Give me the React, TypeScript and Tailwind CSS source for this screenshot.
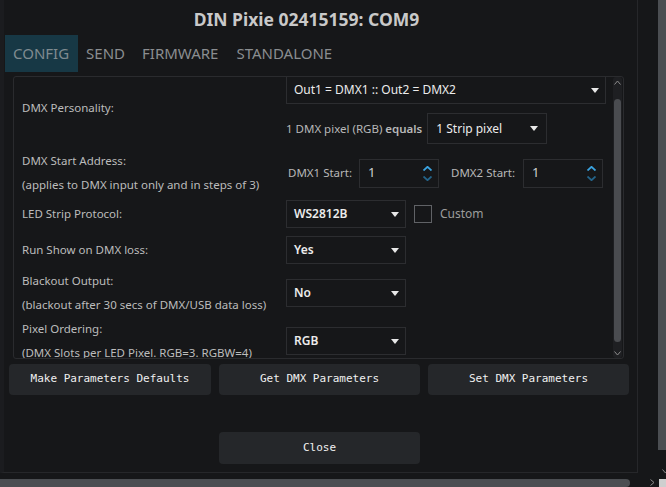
import React from "react";

const Tri = () => (
  <svg width="8" height="5" viewBox="0 0 8 5" className="shrink-0">
    <path d="M0 0 L8 0 L4 5 Z" fill="#e8e8e8" />
  </svg>
);

const Select = ({ text, className = "", bold = false }: { text: string; className?: string; bold?: boolean }) => (
  <div
    className={`flex shrink-0 items-center justify-between border border-[#2c2d30] bg-[#161719] pl-[7px] pr-[6px] text-[12px] text-[#ececec] ${bold ? "font-semibold" : ""} ${className}`}
  >
    <span>{text}</span>
    <Tri />
  </div>
);

const Spin = ({ value, className = "" }: { value: string; className?: string }) => (
  <div className={`flex h-[29px] w-[80px] shrink-0 items-center justify-between border border-[#2c2d30] pl-[8px] pr-[6px] text-[13px] text-[#cfcfcf] ${className}`}>
    <span>{value}</span>
    <div className="flex flex-col items-center gap-[5px]">
      <svg width="9" height="5" viewBox="0 0 9 5">
        <path d="M0.5 4.5 L4.5 0.8 L8.5 4.5" stroke="#3aa3e0" strokeWidth="1.8" fill="none" />
      </svg>
      <svg width="9" height="5" viewBox="0 0 9 5">
        <path d="M0.5 0.5 L4.5 4.2 L8.5 0.5" stroke="#24648a" strokeWidth="1.8" fill="none" />
      </svg>
    </div>
  </div>
);

const Label = ({ children }: { children: React.ReactNode }) => (
  <div className="whitespace-nowrap leading-[24px] text-[11.5px] text-[#bcbcbc]">{children}</div>
);

const Btn = ({ children, className = "" }: { children: React.ReactNode; className?: string }) => (
  <div
    className={`flex items-center justify-center rounded-[4px] bg-[#25272a] text-[11px] text-[#f0f0f0] ${className}`}
    style={{ fontFamily: '"DejaVu Sans Mono", "Liberation Mono", monospace' }}
  >
    {children}
  </div>
);

export default function App() {
  return (
    <div
      className="relative flex h-[487px] w-[666px] flex-col overflow-hidden bg-[#161719]"
      style={{ fontFamily: '"Noto Sans", "Open Sans", sans-serif' }}
    >
      <div className="flex h-[479px] shrink-0">
        {/* main content */}
        <div className="flex h-[473px] w-[638px] shrink-0 flex-col border-b border-r border-[#26272a] border-l-[4px] border-l-[#1b1c1f]">
          <div className="flex h-[35px] shrink-0 items-center justify-center pr-[28px] pt-[3px] text-[17.5px] font-bold text-[#c9c9c9]">
            DIN Pixie 02415159:&nbsp;COM9
          </div>
          <div className="flex h-[37px] shrink-0 items-center pl-[1px] text-[15px] text-[#8a8d90]">
            <div className="flex h-full items-center bg-[#173845] pl-[8px] pr-[9px] text-[#7f8b90]">CONFIG</div>
            <div className="px-[8px]">SEND</div>
            <div className="pl-[9px] pr-[8px]">FIRMWARE</div>
            <div className="pl-[10px] pr-[8px]">STANDALONE</div>
          </div>
          {/* panel */}
          <div className="ml-[9px] mt-[4px] flex h-[283px] w-[611px] shrink-0 overflow-hidden rounded-[3px] border border-[#2a2b2e]">
            <div className="flex flex-1 flex-col pl-[8px]">
              {/* row 1 */}
              <div className="flex h-[72px] shrink-0">
                <div className="w-[264px] pt-[19px]">
                  <Label>DMX Personality:</Label>
                </div>
                <div className="flex flex-col">
                  <Select text="Out1 = DMX1 :: Out2 = DMX2" className="-mt-px h-[28px] w-[320px]" />
                  <div className="mt-[9px] flex items-center">
                    <span className="whitespace-nowrap text-[11.5px] text-[#b8b8b8]">
                      1 DMX pixel (RGB) <span className="font-semibold">equals</span>
                    </span>
                    <Select text="1 Strip pixel" className="ml-[5px] h-[31px] w-[120px] pl-[8px] pr-[8px]" />
                  </div>
                </div>
              </div>
              {/* row 2 */}
              <div className="flex h-[48px] shrink-0 items-center">
                <div className="w-[264px]">
                  <Label>DMX Start Address:</Label>
                  <Label>(applies to DMX input only and in steps of 3)</Label>
                </div>
                <div className="flex items-center whitespace-nowrap text-[11.5px] text-[#b8b8b8]">
                  <span className="ml-[2px]">DMX1 Start:</span>
                  <Spin value="1" className="ml-[7px]" />
                  <span className="ml-[12px]">DMX2 Start:</span>
                  <Spin value="1" className="ml-[8px]" />
                </div>
              </div>
              {/* row 3 */}
              <div className="flex h-[34px] shrink-0 items-center">
                <div className="w-[264px]">
                  <Label>LED Strip Protocol:</Label>
                </div>
                <Select text="WS2812B" bold className="h-[28px] w-[120px]" />
                <div className="ml-[8px] h-[18px] w-[18px] border border-[#606266]" />
                <span className="ml-[8px] text-[12px] text-[#9c9c9c]">Custom</span>
              </div>
              {/* row 4 */}
              <div className="flex h-[38px] shrink-0 items-center">
                <div className="w-[264px]">
                  <Label>Run Show on DMX loss:</Label>
                </div>
                <Select text="Yes" bold className="h-[28px] w-[120px]" />
              </div>
              {/* row 5 */}
              <div className="flex h-[48px] shrink-0 items-center">
                <div className="w-[264px]">
                  <Label>Blackout Output:</Label>
                  <Label>(blackout after 30 secs of DMX/USB data loss)</Label>
                </div>
                <Select text="No" bold className="h-[28px] w-[120px]" />
              </div>
              {/* row 6 */}
              <div className="flex h-[48px] shrink-0 items-center">
                <div className="w-[264px]">
                  <Label>Pixel Ordering:</Label>
                  <Label>(DMX Slots per LED Pixel. RGB=3. RGBW=4)</Label>
                </div>
                <Select text="RGB" bold className="h-[28px] w-[120px]" />
              </div>
            </div>
            {/* inner scrollbar */}
            <div className="mr-px flex w-[9px] shrink-0 flex-col items-center rounded-[3px] bg-[#1e1f22]">
              <svg width="7" height="5" viewBox="0 0 7 5" className="mt-[3px] shrink-0">
                <path d="M0.5 4.5 L3.5 1 L6.5 4.5" stroke="#8c8c8c" strokeWidth="1" fill="none" />
              </svg>
              <div className="mt-[14px] h-[243px] w-[7px] shrink-0 rounded-full bg-[#4a4c50]" />
              <svg width="7" height="5" viewBox="0 0 7 5" className="mt-[9px] shrink-0">
                <path d="M0.5 0.5 L3.5 4 L6.5 0.5" stroke="#8c8c8c" strokeWidth="1" fill="none" />
              </svg>
            </div>
          </div>
          {/* buttons */}
          <div className="ml-[5px] mt-[5px] flex shrink-0 gap-[8px]">
            <Btn className="h-[31px] w-[202px]">Make Parameters Defaults</Btn>
            <Btn className="h-[31px] w-[201px]">Get DMX Parameters</Btn>
            <Btn className="h-[31px] w-[201px]">Set DMX Parameters</Btn>
          </div>
          <div className="ml-[215px] mt-[37px] shrink-0">
            <Btn className="h-[32px] w-[201px]">Close</Btn>
          </div>
        </div>
        <div className="w-[20px] shrink-0" />
        {/* page scrollbar */}
        <div className="flex w-[8px] shrink-0 flex-col items-center">
          <div className="h-[450px] w-[8px] shrink-0 bg-[#4b4e52]" />
          <svg width="7" height="5" viewBox="0 0 7 5" className="ml-[6px] mt-[19px] shrink-0">
            <path d="M0.5 0.5 L3.5 4 L6.5 0.5" stroke="#8c8c8c" strokeWidth="1" fill="none" />
          </svg>
        </div>
      </div>
      {/* bottom horizontal scrollbar */}
      <div className="flex h-[8px] shrink-0 items-center">
        <div className="h-[8px] w-[630px] shrink-0 rounded-r-[4px] bg-[#4b4e52]" />
        <svg width="5" height="7" viewBox="0 0 5 7" className="ml-[20px] mt-[-2px] shrink-0">
          <path d="M0.5 0.5 L4 3.5 L0.5 6.5" stroke="#8c8c8c" strokeWidth="1" fill="none" />
        </svg>
        <div className="ml-[4px] h-[9px] w-[8px] shrink-0 bg-[#cfcfcf]" />
      </div>
    </div>
  );
}
